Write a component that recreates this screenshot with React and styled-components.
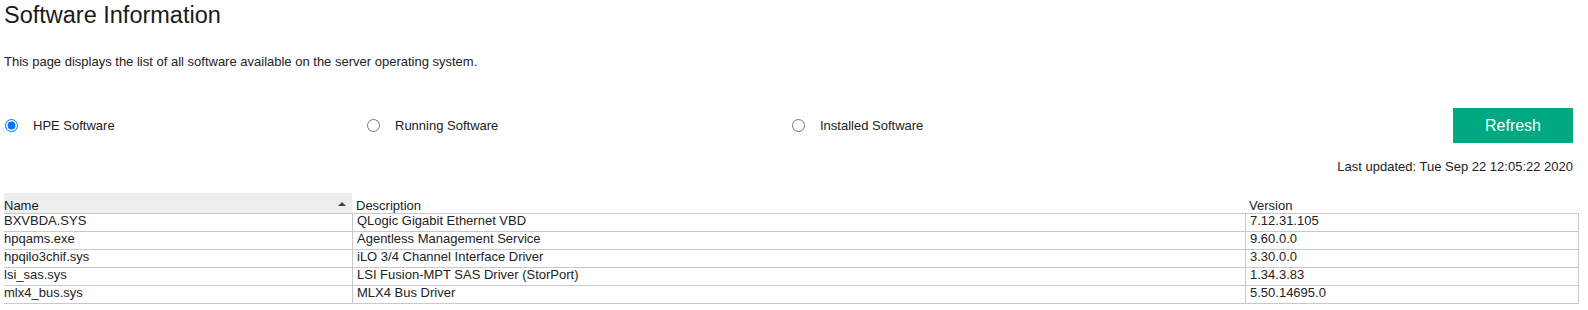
import React, { useState } from "react";
import styled, { createGlobalStyle } from "styled-components";

const GlobalStyle = createGlobalStyle`
  html, body {
    margin: 0;
    padding: 0;
    background: #fff;
  }
  body {
    font-family: "Liberation Sans", Arial, sans-serif;
    color: #222;
  }
`;

const software = [
  { name: "BXVBDA.SYS", description: "QLogic Gigabit Ethernet VBD", version: "7.12.31.105" },
  { name: "hpqams.exe", description: "Agentless Management Service", version: "9.60.0.0" },
  { name: "hpqilo3chif.sys", description: "iLO 3/4 Channel Interface Driver", version: "3.30.0.0" },
  { name: "lsi_sas.sys", description: "LSI Fusion-MPT SAS Driver (StorPort)", version: "1.34.3.83" },
  { name: "mlx4_bus.sys", description: "MLX4 Bus Driver", version: "5.50.14695.0" },
];

const sources = [
  { id: "hpe", label: "HPE Software" },
  { id: "running", label: "Running Software" },
  { id: "installed", label: "Installed Software" },
];

export default function App() {
  const [source, setSource] = useState("hpe");

  return (
    <Page>
      <GlobalStyle />
      <Title>Software Information</Title>
      <Intro>This page displays the list of all software available on the server operating system.</Intro>

      <Toolbar>
        {sources.map((s) => (
          <RadioLabel key={s.id}>
            <Radio
              type="radio"
              name="source"
              checked={source === s.id}
              onChange={() => setSource(s.id)}
            />
            {s.label}
          </RadioLabel>
        ))}
        <RefreshButton type="button">Refresh</RefreshButton>
      </Toolbar>

      <Updated>Last updated: Tue Sep 22 12:05:22 2020</Updated>

      <Table>
        <colgroup>
          <col style={{ width: "348px" }} />
          <col style={{ width: "893px" }} />
          <col />
        </colgroup>
        <thead>
          <tr>
            <HeadCell sorted>
              Name
              <SortArrow />
            </HeadCell>
            <HeadCell>Description</HeadCell>
            <HeadCell>Version</HeadCell>
          </tr>
        </thead>
        <tbody>
          {software.map((row) => (
            <Row key={row.name}>
              <Cell>{row.name}</Cell>
              <Cell divided>{row.description}</Cell>
              <Cell divided last>{row.version}</Cell>
            </Row>
          ))}
        </tbody>
      </Table>
    </Page>
  );
}

const Page = styled.div`
  padding: 0 9px 0 4px;
`;

const Title = styled.h1`
  margin: 1px 0 0;
  font-size: 23.5px;
  line-height: 28px;
  font-weight: normal;
  color: #1a1a1a;
`;

const Intro = styled.p`
  margin: 25px 0 0;
  font-size: 13px;
  line-height: 15px;
`;

const Toolbar = styled.div`
  display: grid;
  grid-template-columns: 362px 425px 1fr auto;
  align-items: center;
  margin-top: 39px;
  padding-right: 6px;
`;

const RadioLabel = styled.label`
  display: flex;
  align-items: center;
  font-size: 13px;
  line-height: 15px;
  color: #222;
`;

const Radio = styled.input`
  width: 13px;
  height: 13px;
  margin: 0 15px 0 1px;
`;

const RefreshButton = styled.button`
  width: 120px;
  height: 35px;
  border: 0;
  border-radius: 0;
  background: #01a982;
  color: #f4fffb;
  font-family: "Liberation Sans", Arial, sans-serif;
  font-size: 16px;
  cursor: pointer;
`;

const Updated = styled.div`
  margin-top: 16px;
  padding-right: 6px;
  text-align: right;
  font-size: 13px;
  line-height: 15px;
`;

const Table = styled.table`
  margin-top: 19px;
  width: 100%;
  table-layout: fixed;
  border-collapse: separate;
  border-spacing: 0;
  font-size: 13px;
`;

const HeadCell = styled.th`
  position: relative;
  height: 20px;
  padding: 6px 4px 0 ${({ sorted }) => (sorted ? "0" : "4px")};
  box-sizing: border-box;
  line-height: 14px;
  text-align: left;
  font-weight: normal;
  vertical-align: top;
  background: ${({ sorted }) => (sorted ? "#eeeeee" : "transparent")};
`;

const SortArrow = styled.span`
  position: absolute;
  right: 6px;
  top: 9px;
  width: 0;
  height: 0;
  border-left: 4px solid transparent;
  border-right: 4px solid transparent;
  border-bottom: 4px solid #444;
`;

const Row = styled.tr`
  &:first-child td {
    border-top: 1px solid #c9c9c9;
  }
`;

const Cell = styled.td`
  padding: 0 4px 3px ${({ divided }) => (divided ? "4px" : "0")};
  line-height: 14px;
  vertical-align: top;
  white-space: nowrap;
  overflow: hidden;
  border-bottom: 1px solid #c9c9c9;
  border-left: ${({ divided }) => (divided ? "1px solid #c9c9c9" : "0")};
  border-right: ${({ last }) => (last ? "1px solid #c9c9c9" : "0")};
`;
